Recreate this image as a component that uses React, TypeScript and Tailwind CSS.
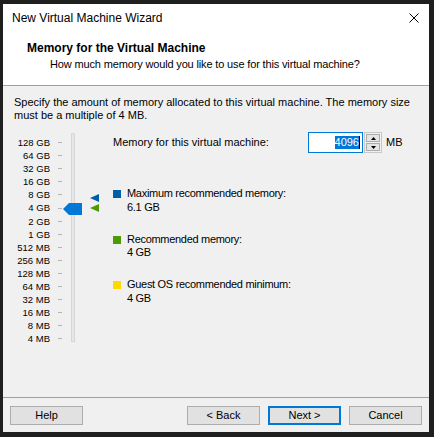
const sizes = [
  "128 GB",
  "64 GB",
  "32 GB",
  "16 GB",
  "8 GB",
  "4 GB",
  "2 GB",
  "1 GB",
  "512 MB",
  "256 MB",
  "128 MB",
  "64 MB",
  "32 MB",
  "16 MB",
  "8 MB",
  "4 MB",
]

function MemorySlider() {
  return (
    <div className="relative flex pt-[4px] w-[99px] shrink-0">
      {/* scale labels */}
      <div className="flex flex-col w-[36px] text-[9.5px] leading-[13.1px] text-right">
        {sizes.map((s) => (
          <div key={s} className="h-[13.1px] whitespace-nowrap">
            {s}
          </div>
        ))}
      </div>
      {/* tick marks */}
      <div className="flex flex-col ml-[8px] w-[4px]">
        {sizes.map((s) => (
          <div key={s} className="h-[13.1px] flex items-center">
            <div className="w-[4px] h-px bg-[#b4b4b4]" />
          </div>
        ))}
      </div>
      {/* track */}
      <div className="ml-[9px] -mt-[3px] w-[4px] h-[209px] bg-[#e7e7e7] border border-[#d6d6d6]" />

      {/* thumb at 4 GB */}
      <svg className="absolute left-[49px] top-[71px]" width="19" height="12" viewBox="0 0 19 12">
        <path d="M0 6 L6 0 H19 V12 H6 Z" fill="#0078d7" />
      </svg>
      {/* max recommended marker */}
      <svg className="absolute left-[76px] top-[62px]" width="9" height="8" viewBox="0 0 9 8">
        <path d="M0 4 L9 0 V8 Z" fill="#005ea8" />
      </svg>
      {/* recommended marker */}
      <svg className="absolute left-[76px] top-[72px]" width="9" height="8" viewBox="0 0 9 8">
        <path d="M0 4 L9 0 V8 Z" fill="#4e9a06" />
      </svg>
    </div>
  )
}

function LegendItem({ color, label, value }: { color: string; label: string; value: string }) {
  return (
    <div className="flex">
      <div className={`w-[8px] h-[8px] mt-[3px] shrink-0 ${color}`} />
      <div className="ml-[6px] leading-[13.5px] tracking-[-0.3px]">
        <div>{label}</div>
        <div>{value}</div>
      </div>
    </div>
  )
}

function Button({ children, primary }: { children: string; primary?: boolean }) {
  return (
    <button
      className={`w-[73px] h-[19px] bg-[#e1e1e1] text-[11px] leading-none flex items-center justify-center ${
        primary ? "border-2 border-[#0078d7]" : "border border-[#adadad]"
      }`}
    >
      {children}
    </button>
  )
}

export default function App() {
  return (
    <div className="w-[434px] h-[437px] bg-[#1f1f1f] pt-[4px] pl-[3px] font-['Liberation_Sans',Arial,sans-serif] text-[11px] text-black">
      <div className="w-[426px] h-[428px] bg-[#f0f0f0] flex flex-col">
        {/* title bar + page header */}
        <div className="bg-white h-[82px] border-b border-[#a0a0a0] shrink-0">
          <div className="flex justify-between pl-[9px] pr-[10px] pt-[6px]">
            <span className="text-[12px] leading-[16px]">New Virtual Machine Wizard</span>
            <svg className="mt-[3px]" width="10" height="10" viewBox="0 0 10 10">
              <path d="M0.5 0.5 L9.5 9.5 M9.5 0.5 L0.5 9.5" stroke="#000" strokeWidth="1" />
            </svg>
          </div>
          <div className="pl-[24px] mt-[14px] text-[12px] font-bold leading-[16px]">Memory for the Virtual Machine</div>
          <div className="pl-[47px] leading-[16px] tracking-[-0.15px]">
            How much memory would you like to use for this virtual machine?
          </div>
        </div>

        {/* content */}
        <div className="flex-1 px-[11px] pt-[10px]">
          <p className="leading-[13px] whitespace-nowrap">
            Specify the amount of memory allocated to this virtual machine. The memory size
            <br />
            must be a multiple of 4 MB.
          </p>

          <div className="flex mt-[10px]">
            <MemorySlider />

            <div className="flex flex-col">
              <div className="flex items-center h-[21px]">
                <span className="w-[195px]">Memory for this virtual machine:</span>
                <div className="w-[55px] h-[21px] bg-white border border-[#0078d7] flex items-center justify-end pr-[2px]">
                  <span className="bg-[#0078d7] text-white leading-[13px]">4096</span>
                  <span className="w-px h-[13px] bg-black" />
                </div>
                <div className="ml-[1px] w-[18px] h-[21px] border border-[#c8c8c8] flex flex-col justify-center gap-px p-px">
                  <div className="h-[8px] bg-[#e5e5e5] border border-[#adadad] flex items-center justify-center">
                    <svg width="5" height="3" viewBox="0 0 5 3">
                      <path d="M2.5 0 L5 3 H0 Z" fill="#000" />
                    </svg>
                  </div>
                  <div className="h-[8px] bg-[#e5e5e5] border border-[#adadad] flex items-center justify-center">
                    <svg width="5" height="3" viewBox="0 0 5 3">
                      <path d="M0 0 H5 L2.5 3 Z" fill="#000" />
                    </svg>
                  </div>
                </div>
                <span className="ml-[4px]">MB</span>
              </div>

              <div className="flex flex-col gap-[18.5px] mt-[34px]">
                <LegendItem color="bg-[#005ea8]" label="Maximum recommended memory:" value="6.1 GB" />
                <LegendItem color="bg-[#4e9a06]" label="Recommended memory:" value="4 GB" />
                <LegendItem color="bg-[#ffd800]" label="Guest OS recommended minimum:" value="4 GB" />
              </div>
            </div>
          </div>
        </div>

        {/* button row */}
        <div className="h-[35px] border-t border-[#a0a0a0] flex items-start pt-[8px] px-[7px] shrink-0">
          <Button>Help</Button>
          <div className="flex-1" />
          <div className="flex gap-[8px]">
            <Button>&lt; Back</Button>
            <Button primary>Next &gt;</Button>
            <Button>Cancel</Button>
          </div>
        </div>
      </div>
    </div>
  )
}
